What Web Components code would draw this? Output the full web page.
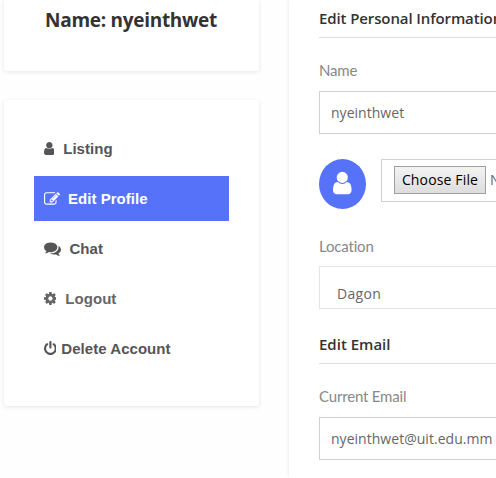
<!DOCTYPE html>
<html lang="en">
<head>
<meta charset="utf-8">
<title>Edit Profile</title>
<style>
html,body{margin:0;height:478px;overflow:hidden;background:#fefefe}
body{font:14px "Open Sans",sans-serif;color:#666}
</style>
</head>
<body>
<script>
const ICONS = {
  user:[256,1280,'M1536 1399q0 109-62.5 187t-150.5 78h-854q-88 0-150.5-78t-62.5-187q0-85 8.5-160.5t31.5-152 58.5-131 94-89 134.5-34.5q131 128 313 128t313-128q76 0 134.5 34.5t94 89 58.5 131 31.5 152 8.5 160.5zm-256-887q0 159-112.5 271.5t-271.5 112.5-271.5-112.5-112.5-271.5 112.5-271.5 271.5-112.5 271.5 112.5 112.5 271.5z'],
  edit:[0,1792,'M888 1184l116-116-152-152-116 116v56h96v96h56zm440-720q-16-16-33 1l-350 350q-17 17-1 33t33-1l350-350q17-17 1-33zm80 594v190q0 119-84.5 203.5t-203.5 84.5h-832q-119 0-203.5-84.5t-84.5-203.5v-832q0-119 84.5-203.5t203.5-84.5h832q63 0 117 25 15 7 18 23 3 17-9 29l-49 49q-14 14-32 8-23-6-45-6h-832q-66 0-113 47t-47 113v832q0 66 47 113t113 47h832q66 0 113-47t47-113v-126q0-13 9-22l64-64q15-15 35-7t20 29zm-96-738l288 288-672 672h-288v-288zm444 132l-92 92-288-288 92-92q28-28 68-28t68 28l152 152q28 28 28 68t-28 68z'],
  chat:[0,1792,'M1408 768q0 139-94 257t-256.5 186.5-353.5 68.5q-86 0-176-16-124 88-278 128-36 9-86 16h-3q-11 0-20.5-8t-11.5-21q-1-3-1-6.5t.5-6.5 2-6l2.5-5 3.5-5.5 4-5 4.5-5 4-4.5q5-6 23-25t26-29.5 22.5-29 25-38.5 20.5-44q-124-72-195-177t-71-224q0-139 94-257t256.5-186.5 353.5-68.5 353.5 68.5 256.5 186.5 94 257zm384 256q0 120-71 224.5t-195 176.5q10 24 20.5 44t25 38.5 22.5 29 26 29.5 23 25q1 1 4 4.5t4.5 5 4 5 3.5 5.5l2.5 5 2 6 .5 6.5-1 6.5q-3 14-13 22t-22 7q-50-7-86-16-154-40-278-128-90 16-176 16-271 0-472-132 58 4 88 4 161 0 309-45t264-129q125-92 192-212t67-254q0-77-23-152 129 71 204 178t75 230z'],
  cog:[128,1536,'M1152 896q0-106-75-181t-181-75-181 75-75 181 75 181 181 75 181-75 75-181zm512-109v222q0 12-8 23t-20 13l-185 28q-19 54-39 91 35 50 107 138 10 12 10 25t-9 23q-27 37-99 108t-94 71q-12 0-26-9l-138-108q-44 23-91 38-16 136-29 186-7 28-36 28h-222q-14 0-24.5-8.5t-11.5-21.5l-28-184q-49-16-90-37l-141 107q-10 9-25 9-14 0-25-11-126-114-165-168-7-10-7-23 0-12 8-23 15-21 51-66.5t54-70.5q-27-50-41-99l-183-27q-13-2-21-12.5t-8-23.5v-222q0-12 8-23t19-13l186-28q14-46 39-92-40-57-107-138-10-12-10-24 0-10 9-23 26-36 98.5-107.5t94.5-71.5q13 0 26 10l138 107q44-23 91-38 16-136 29-186 7-28 36-28h222q14 0 24.5 8.5t11.5 21.5l28 184q49 16 90 37l142-107q9-9 24-9 13 0 25 10 129 119 165 170 7 8 7 22 0 12-8 23-15 21-51 66.5t-54 70.5q26 50 41 98l183 28q13 2 21 12.5t8 23.5z'],
  power:[128,1536,'M1664 896q0 156-61 298t-164 245-245 164-298 61-298-61-245-164-164-245-61-298q0-182 80.5-343t226.5-270q43-32 95.5-25t83.5 50q32 42 24.5 94.5t-49.5 84.5q-98 74-151.5 181t-53.5 228q0 104 40.5 198.5t109.5 163.5 163.5 109.5 198.5 40.5 198.5-40.5 163.5-109.5 109.5-163.5 40.5-198.5q0-121-53.5-228t-151.5-181q-42-32-49.5-84.5t24.5-94.5q31-43 84-50t95 25q146 109 226.5 270t80.5 343zm-640-768v640q0 52-38 90t-90 38-90-38-38-90v-640q0-52 38-90t90-38 90 38 38 90z']
};
const define = (name, html, setup) => customElements.define(name, class extends HTMLElement {
  connectedCallback() {
    if (this.shadowRoot) return;
    this.attachShadow({mode:'open'}).innerHTML = html;
    if (setup) setup(this, this.shadowRoot);
  }
});

define('glyph-icon', `<style>:host{display:block;flex:none}svg{display:block;fill:currentColor}</style><svg><path/></svg>`, (el, root) => {
  const [x, w, d] = ICONS[el.getAttribute('name')];
  const size = +(el.getAttribute('size') || 15);
  const svg = root.querySelector('svg');
  svg.setAttribute('viewBox', `${x} 0 ${w} 1792`);
  svg.setAttribute('width', w / 1792 * size);
  svg.setAttribute('height', size);
  root.querySelector('path').setAttribute('d', d);
});

define('profile-page', `<style>
:host{display:grid;grid-template-columns:255px 1fr;column-gap:30px;padding-left:4px;height:478px;box-sizing:border-box;overflow:hidden}
.side{display:flex;flex-direction:column;gap:29px}
</style><div class="side"><slot name="side"></slot></div><slot></slot>`);

define('side-card', `<style>
:host{display:block;box-sizing:border-box;background:#fff;border-radius:3px;box-shadow:0 1px 4px rgba(0,0,0,.1)}
:host([kind=name]){height:71px;border-radius:0 0 3px 3px;padding-top:6px}
:host([kind=menu]){height:306px;padding:26px 30px 35px}
</style><slot></slot>`);

define('user-name', `<style>
:host{display:block;margin-left:-1px;text-align:center;font:700 19px/28px "Open Sans",sans-serif;letter-spacing:-.28px;color:#333}
</style><slot></slot>`);

define('menu-item', `<style>
:host{display:flex;align-items:center;height:45px;margin-bottom:5px;padding-left:9.5px;font:bold 15px/45px "Liberation Sans",Arial,sans-serif;letter-spacing:.04px;color:#555;white-space:nowrap}
:host([active]){background:#5672f9;color:#fff}
:host([muted]){color:#666}
span{margin-left:var(--gap,9px)}
</style><span><slot></slot></span>`, (el, root) => {
  const icon = document.createElement('glyph-icon');
  icon.setAttribute('name', el.getAttribute('icon'));
  if (el.hasAttribute('icon-size')) icon.setAttribute('size', el.getAttribute('icon-size'));
  root.querySelector('span').before(icon);
});

define('form-panel', `<style>
:host{display:block;min-width:0;box-sizing:border-box;height:477px;padding-left:30px;background:#fff;box-shadow:0 0 3px rgba(0,0,0,.12);clip-path:inset(0 0 0 -4px)}
</style><slot></slot>`);

define('section-title', `<style>
:host{display:block;box-sizing:border-box;height:38px;padding-top:7px;border-bottom:1px solid #ddd;font:600 15px/22px "Open Sans",sans-serif;letter-spacing:-.11px;color:#333;white-space:nowrap}
:host([next]){height:55px;padding-top:24px;letter-spacing:0}
</style><slot></slot>`);

define('field-label', `<style>
:host{display:block;height:20px;padding-top:22px;margin-bottom:11px;font:15px/20px Lato,sans-serif;letter-spacing:-.18px;color:#888}
:host([location]){padding-top:27px;margin-bottom:10px}
</style><slot></slot>`);

define('text-field', `<style>
:host{display:block;box-sizing:border-box;height:43px;padding-left:11px;border:1px solid #ced0da;border-right:0;background:#fff;font:14px/41px "Open Sans",sans-serif;letter-spacing:.03px;color:#666;white-space:nowrap}
:host([select]){padding:6px 0 0 17px;border-color:#e4e4e8;letter-spacing:.3px}
</style><slot></slot>`);

define('avatar-upload', `<style>
:host{display:flex;align-items:flex-start;height:50px;margin-top:25px}
.avatar{flex:none;display:grid;place-items:center;width:47px;height:50px;border-radius:50%;background:#5672f9;color:#fff}
.avatar glyph-icon{margin-top:-2px}
.file{flex:1;min-width:0;overflow:hidden;box-sizing:border-box;height:43px;margin-left:15px;border:1px solid #ced0da;border-right:0;padding:6px 0 6px 12px;display:flex;align-items:flex-start;gap:4px;white-space:nowrap;font:14px/28px "Open Sans",sans-serif}
button{flex:none;box-sizing:border-box;width:92px;height:28px;margin:0;padding:0;border:1px solid #a0a0a0;border-radius:0;background:linear-gradient(#f3f3f3,#ddd);font:14px/26px "Open Sans",sans-serif;letter-spacing:.15px;color:#000}
</style><div class="avatar"><glyph-icon name="user" size="26"></glyph-icon></div><div class="file"><button>Choose File</button><span><slot></slot></span></div>`);
</script>
<profile-page>
  <side-card slot="side" kind="name"><user-name>Name: nyeinthwet</user-name></side-card>
  <side-card slot="side" kind="menu">
    <menu-item icon="user">Listing</menu-item>
    <menu-item icon="edit" active icon-size="16" style="--gap:8.5px">Edit Profile</menu-item>
    <menu-item icon="chat" icon-size="17" style="--gap:9px">Chat</menu-item>
    <menu-item icon="cog" muted>Logout</menu-item>
    <menu-item icon="power" style="--gap:5px">Delete Account</menu-item>
  </side-card>
  <form-panel>
    <section-title>Edit Personal Information</section-title>
    <field-label>Name</field-label>
    <text-field>nyeinthwet</text-field>
    <avatar-upload>No file chosen</avatar-upload>
    <field-label location>Location</field-label>
    <text-field select>Dagon</text-field>
    <section-title next>Edit Email</section-title>
    <field-label>Current Email</field-label>
    <text-field>nyeinthwet@uit.edu.mm</text-field>
  </form-panel>
</profile-page>
</body>
</html>
